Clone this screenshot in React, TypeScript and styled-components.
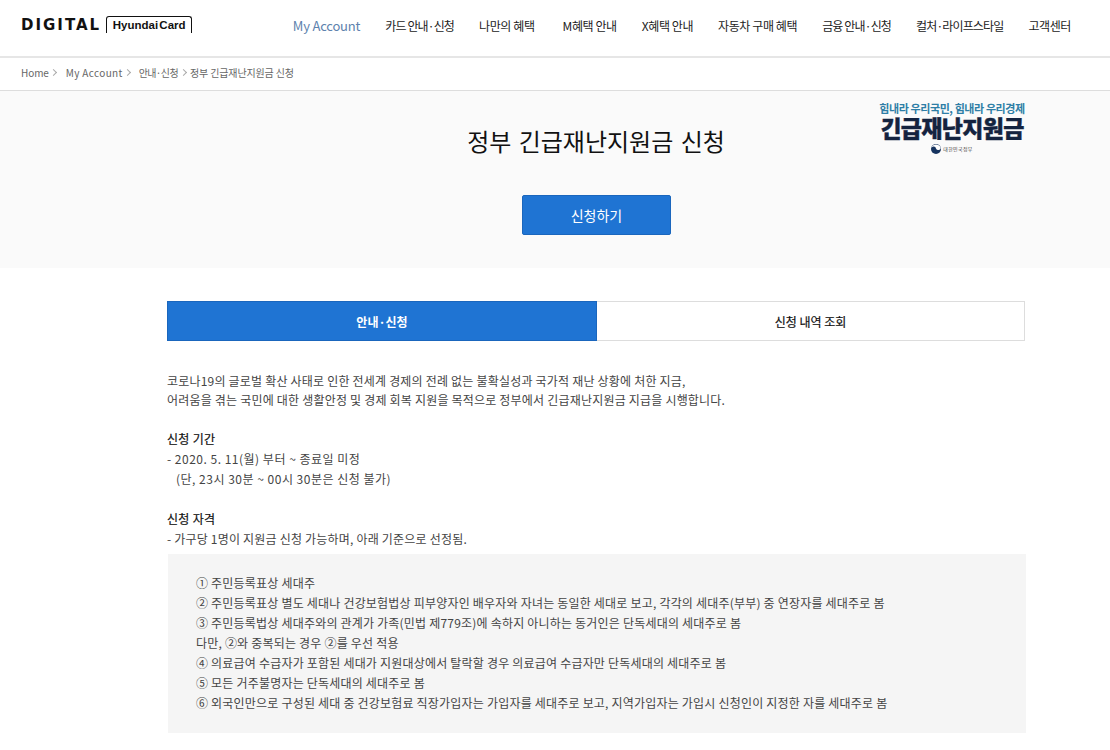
import styled, { createGlobalStyle } from 'styled-components';

const GlobalStyle = createGlobalStyle`
    html, body {
        margin: 0;
        padding: 0;
        background: #ffffff;
        overflow: hidden;
    }
    body {
        font-family: "Noto Sans CJK KR", "Noto Sans", sans-serif;
        font-size: 12px;
        color: #333333;
    }
`;

const Header = styled.header`
    height: 50px;
    padding: 0 39px 6px 21px;
    display: flex;
    justify-content: space-between;
    align-items: center;
    border-bottom: 2px solid #e6e6e6;
`;

const Brand = styled.div`
    display: flex;
    align-items: center;
    gap: 5px;
`;

const BrandWord = styled.span`
    font-family: "DejaVu Sans", sans-serif;
    font-size: 15px;
    font-weight: 700;
    letter-spacing: 2px;
    color: #111111;
    line-height: 17px;
`;

const BrandCard = styled.span`
    height: 17px;
    width: 86px;
    margin-top: -2px;
    box-sizing: border-box;
    border: 1px solid #111111;
    border-bottom: none;
    border-radius: 3px 3px 0 0;
    display: flex;
    justify-content: center;
    align-items: center;
    font-family: "Liberation Sans", sans-serif;
    font-size: 11.5px;
    font-weight: 700;
    word-spacing: -2px;
    color: #111111;
`;

const Nav = styled.ul`
    list-style-type: none;
    margin: 0;
    padding: 0;
    display: flex;
    align-items: center;
    gap: 25px;
    li:nth-child(3) {
        margin-right: 3px;
    }
`;

const NavItem = styled.li<{ $tight?: boolean }>`
    font-size: 12px;
    white-space: nowrap;
    letter-spacing: ${props => (props.$tight ? -0.85 : -0.4)}px;
    color: #222222;
`;

const ActiveNavItem = styled.li`
    font-size: 13px;
    white-space: nowrap;
    letter-spacing: -0.2px;
    color: #5d82ad;
`;

const Crumbs = styled.div`
    height: 33px;
    padding: 0 0 3px 21px;
    box-sizing: border-box;
    display: flex;
    align-items: center;
    border-bottom: 1px solid #dddddd;
    font-size: 10px;
    color: #666666;
`;

const Crumb = styled.span<{ $spacing: number }>`
    letter-spacing: ${props => props.$spacing}px;
`;

const Chevron = styled.span<{ $after: number }>`
    width: 4px;
    height: 4px;
    margin: 0 ${props => props.$after}px 0 2.5px;
    border-top: 1px solid #aaaaaa;
    border-right: 1px solid #aaaaaa;
    transform: rotate(45deg);
`;

const Hero = styled.section`
    position: relative;
    height: 177px;
    background: #fafafa;
    padding-left: 167px;
`;

const HeroInner = styled.div`
    width: 858px;
    display: flex;
    flex-direction: column;
    align-items: center;
`;

const Title = styled.h1`
    margin: 30px 0 0;
    font-size: 24px;
    line-height: 40px;
    font-weight: 400;
    word-spacing: 2px;
    color: #111111;
`;

const ApplyButton = styled.button`
    margin: 34px 0 0 1px;
    width: 149px;
    height: 40px;
    border: 1px solid #1a66bd;
    border-radius: 2px;
    background: #1f74d3;
    color: #ffffff;
    font: inherit;
    font-size: 14px;
`;

const GovLogo = styled.div`
    position: absolute;
    top: 10px;
    left: 880px;
    width: 144px;
    display: flex;
    flex-direction: column;
    align-items: center;
`;

const GovSlogan = styled.div`
    font-size: 11px;
    line-height: 15px;
    font-weight: 700;
    white-space: nowrap;
    letter-spacing: -0.4px;
    color: #2e7ea6;
`;

const GovHeadline = styled.div`
    font-size: 23px;
    line-height: 22px;
    font-weight: 900;
    white-space: nowrap;
    letter-spacing: -0.7px;
    -webkit-text-stroke: 0.4px #14233f;
    color: #14233f;
`;

const GovOrg = styled.div`
    margin-top: 6px;
    display: flex;
    align-items: center;
    gap: 2px;
    font-size: 5px;
    line-height: 10px;
    letter-spacing: 0.3px;
    color: #444444;
`;

const Main = styled.main`
    margin-left: 167px;
    width: 858px;
    padding-top: 33px;
`;

const Tabs = styled.div`
    display: grid;
    grid-template-columns: 430px 1fr;
    height: 40px;
`;

const Tab = styled.div<{ $active?: boolean }>`
    display: flex;
    justify-content: center;
    align-items: center;
    box-sizing: border-box;
    font-size: 12px;
    font-weight: ${props => (props.$active ? 700 : 400)};
    -webkit-text-stroke: ${props => (props.$active ? 0 : 0.2)}px;
    color: ${props => (props.$active ? '#ffffff' : '#111111')};
    background: ${props => (props.$active ? '#1f74d3' : '#ffffff')};
    border: 1px solid ${props => (props.$active ? '#1a66bd' : '#dddddd')};
    border-left-width: ${props => (props.$active ? 1 : 0)}px;
`;

const Paragraph = styled.p`
    margin: 0;
    font-size: 12px;
    line-height: 20px;
    letter-spacing: 0.2px;
    color: #444444;
    white-space: nowrap;
`;

const Intro = styled(Paragraph)`
    margin-top: 30px;
    line-height: 19px;
`;

const Section = styled.div`
    margin-top: 20px;
`;

const SectionHead = styled(Paragraph)`
    color: #111111;
    letter-spacing: 0.3px;
    -webkit-text-stroke: 0.2px #111111;
`;

const DateLine = styled(Paragraph)`
    letter-spacing: 0.5px;
`;

const Note = styled(DateLine)`
    padding-left: 9px;
`;

const CriteriaBox = styled.div`
    margin: 5px -1px 0 1px;
    background: #f5f5f5;
    padding: 19px 28px 13px;
    height: 179px;
    box-sizing: border-box;
`;

const App = () => {
    return (
        <>
            <GlobalStyle />
            <Header>
                <Brand>
                    <BrandWord>DIGITAL</BrandWord>
                    <BrandCard>Hyundai Card</BrandCard>
                </Brand>
                <Nav>
                    <ActiveNavItem>My Account</ActiveNavItem>
                    {['카드 안내·신청', '나만의 혜택', 'M혜택 안내', 'X혜택 안내', '자동차 구매 혜택', '금융 안내·신청', '컬처·라이프스타일', '고객센터']
                        .map((item) => (
                            <NavItem key={item} $tight={item.includes('·')}>{item}</NavItem>
                        ))}
                </Nav>
            </Header>
            <Crumbs>
                <Crumb $spacing={-0.1}>Home</Crumb><Chevron $after={9.5} />
                <Crumb $spacing={0.35}>My Account</Crumb><Chevron $after={8.5} />
                <Crumb $spacing={-0.6}>안내·신청</Crumb><Chevron $after={4.5} />
                <Crumb $spacing={-0.15}>정부 긴급재난지원금 신청</Crumb>
            </Crumbs>
            <Hero>
                <HeroInner>
                    <Title>정부 긴급재난지원금 신청</Title>
                    <ApplyButton>신청하기</ApplyButton>
                </HeroInner>
                <GovLogo>
                    <GovSlogan>힘내라 우리국민, 힘내라 우리경제</GovSlogan>
                    <GovHeadline>긴급재난지원금</GovHeadline>
                    <GovOrg>
                        <svg width="10" height="10" viewBox="0 0 20 20">
                            <circle cx="10" cy="10" r="10" fill="#16335f" />
                            <path d="M0.4 8 A10 10 0 0 1 19.6 8 A5 5 0 0 1 10 9 A5 5 0 0 0 0.4 8 Z" fill="#ffffff" />
                        </svg>
                        대한민국정부
                    </GovOrg>
                </GovLogo>
            </Hero>
            <Main>
                <Tabs>
                    <Tab $active>안내·신청</Tab>
                    <Tab>신청 내역 조회</Tab>
                </Tabs>
                <Intro>
                    코로나19의 글로벌 확산 사태로 인한 전세계 경제의 전례 없는 불확실성과 국가적 재난 상황에 처한 지금,<br />
                    어려움을 겪는 국민에 대한 생활안정 및 경제 회복 지원을 목적으로 정부에서 긴급재난지원금 지급을 시행합니다.
                </Intro>
                <Section>
                    <SectionHead>신청 기간</SectionHead>
                    <DateLine>- 2020. 5. 11(월) 부터 ~ 종료일 미정</DateLine>
                    <Note>(단, 23시 30분 ~ 00시 30분은 신청 불가)</Note>
                </Section>
                <Section>
                    <SectionHead>신청 자격</SectionHead>
                    <Paragraph>- 가구당 1명이 지원금 신청 가능하며, 아래 기준으로 선정됨.</Paragraph>
                </Section>
                <CriteriaBox>
                    <Paragraph>① 주민등록표상 세대주</Paragraph>
                    <Paragraph>② 주민등록표상 별도 세대나 건강보험법상 피부양자인 배우자와 자녀는 동일한 세대로 보고, 각각의 세대주(부부) 중 연장자를 세대주로 봄</Paragraph>
                    <Paragraph>③ 주민등록법상 세대주와의 관계가 가족(민법 제779조)에 속하지 아니하는 동거인은 단독세대의 세대주로 봄</Paragraph>
                    <Paragraph>다만, ②와 중복되는 경우 ②를 우선 적용</Paragraph>
                    <Paragraph>④ 의료급여 수급자가 포함된 세대가 지원대상에서 탈락할 경우 의료급여 수급자만 단독세대의 세대주로 봄</Paragraph>
                    <Paragraph>⑤ 모든 거주불명자는 단독세대의 세대주로 봄</Paragraph>
                    <Paragraph>⑥ 외국인만으로 구성된 세대 중 건강보험료 직장가입자는 가입자를 세대주로 보고, 지역가입자는 가입시 신청인이 지정한 자를 세대주로 봄</Paragraph>
                </CriteriaBox>
            </Main>
        </>
    );
};

export default App;
